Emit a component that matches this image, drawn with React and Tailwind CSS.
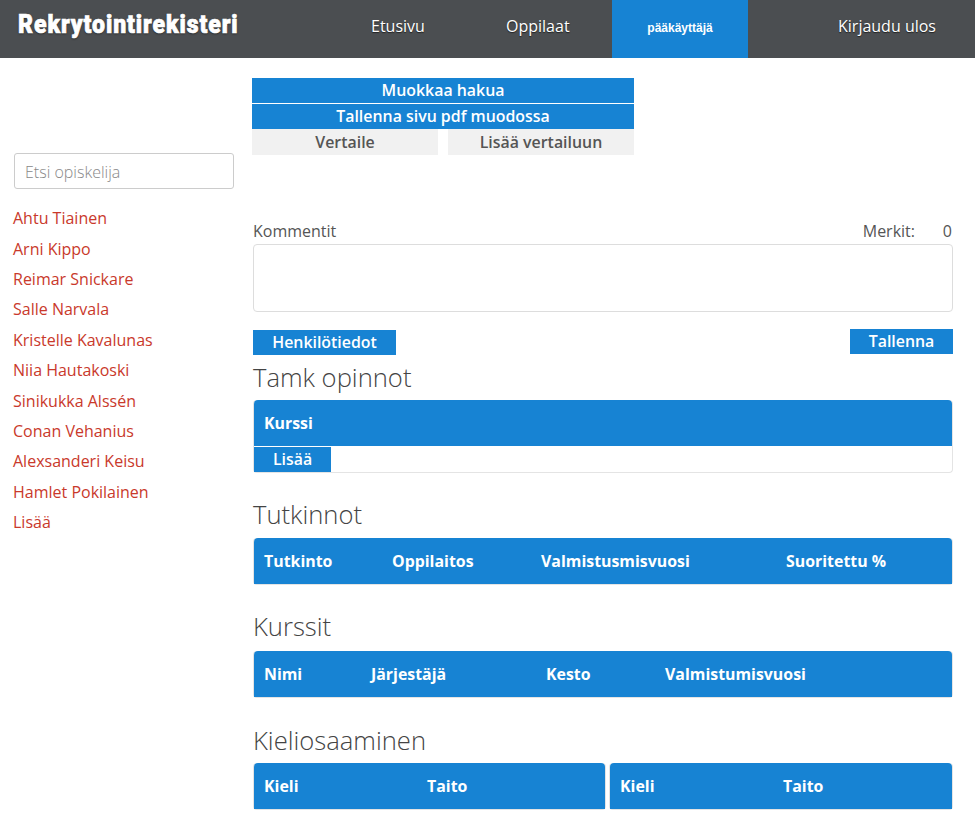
import React from 'react';

const students = [
  'Ahtu Tiainen',
  'Arni Kippo',
  'Reimar Snickare',
  'Salle Narvala',
  'Kristelle Kavalunas',
  'Niia Hautakoski',
  'Sinikukka Alssén',
  'Conan Vehanius',
  'Alexsanderi Keisu',
  'Hamlet Pokilainen',
  'Lisää',
];

function TableHead({ children, className = '' }) {
  return (
    <div className={`h-[46px] pt-[1px] bg-[#1783d3] text-white font-bold text-[15.9px] flex items-center rounded-t-[4px] ${className}`}>
      {children}
    </div>
  );
}

function Heading({ children, className = '' }) {
  return <h2 className={`text-[25.6px] leading-[37px] font-light text-[#444] ${className}`}>{children}</h2>;
}

function Table({ cols }) {
  return (
    <div className="border border-[#e4e4e4] border-t-0 rounded-[4px] h-[47px]">
      <TableHead>
        {cols.map(([name, w]) => (
          <span key={name} className="pl-[10px] shrink-0" style={{ width: w }}>{name}</span>
        ))}
      </TableHead>
    </div>
  );
}

export default function App() {
  return (
    <div className="font-['Open_Sans',sans-serif] antialiased text-[#555] bg-white overflow-hidden h-[823px]">
      <header className="h-[58px] bg-[#4b4e51] flex text-white">
        <div className="w-[371px] pl-[18px] pt-[8px] shrink-0">
          <span className="inline-block origin-left scale-x-[0.92] font-['Roboto',sans-serif] font-black text-[25px] leading-[34px] tracking-[1px] [-webkit-text-stroke:0.7px_white] [text-shadow:0_1px_2px_#222] whitespace-nowrap">
            Rekrytointirekisteri
          </span>
        </div>
        <a className="w-[135px] pt-[14px] text-[16px] leading-[24px] [text-shadow:0_1px_1px_#222] shrink-0">Etusivu</a>
        <a className="w-[106px] pt-[14px] text-[16px] leading-[24px] [text-shadow:0_1px_1px_#222] shrink-0">Oppilaat</a>
        <a className="w-[136px] bg-[#1783d3] pt-[19px] text-center font-['Liberation_Sans',sans-serif] font-bold text-[12px] leading-[18px] shrink-0">pääkäyttäjä</a>
        <a className="ml-[90px] pt-[14px] text-[16px] leading-[24px] [text-shadow:0_1px_1px_#222]">Kirjaudu ulos</a>
      </header>

      <div className="flex">
        <aside className="w-[253px] shrink-0 pl-[13px] pt-[95px]">
          <input
            placeholder="Etsi opiskelija"
            className="block w-[220px] ml-[1px] h-[36px] border border-[#ccc] rounded-[3px] px-[10px] pt-[2px] text-[16px] font-light outline-none placeholder:text-[#888]"
          />
          <ul className="mt-[14.2px] text-[16px] leading-[30.4px] text-[#c9392b]">
            {students.map((s) => <li key={s}>{s}</li>)}
          </ul>
        </aside>

        <main className="w-[700px] shrink-0 pt-[20px]">
          <div className="w-[382px] -ml-[1px] font-semibold text-[15.9px] text-center">
            <button className="block w-full h-[25px] mb-[1px] bg-[#1783d3] text-white leading-[25px]">Muokkaa hakua</button>
            <button className="block w-full h-[25px] bg-[#1783d3] text-white leading-[25px]">Tallenna sivu pdf muodossa</button>
            <div className="flex justify-between">
              <button className="w-[186px] h-[26px] bg-[#f1f1f1] leading-[26px]">Vertaile</button>
              <button className="w-[186px] h-[26px] bg-[#f1f1f1] leading-[26px]">Lisää vertailuun</button>
            </div>
          </div>

          <div className="flex justify-between mt-[64px] pr-[1px] text-[16px] leading-[24px]">
            <span>Kommentit</span>
            <span className="flex"><span>Merkit:</span><span className="w-[37px] text-right">0</span></span>
          </div>
          <textarea className="block w-[700px] h-[68px] mt-[1px] border border-[#ddd] rounded-[4px] outline-none resize-none" />

          <div className="flex justify-between items-start mt-[17px] font-semibold text-[15.9px] text-white">
            <button className="w-[143px] h-[25px] mt-[1px] bg-[#1783d3] leading-[25px]">Henkilötiedot</button>
            <button className="w-[103px] h-[25px] bg-[#1783d3] leading-[25px]">Tallenna</button>
          </div>

          <Heading className="mt-[4px]">Tamk opinnot</Heading>
          <div className="mt-[4px] border border-[#e4e4e4] border-t-0 rounded-[4px] h-[73px]">
            <TableHead><span className="pl-[10px]">Kurssi</span></TableHead>
            <button className="block w-[77px] h-[25px] mt-[1px] bg-[#1783d3] text-white font-semibold text-[15.9px] leading-[25px]">Lisää</button>
          </div>

          <Heading className="mt-[23px] mb-[5px]">Tutkinnot</Heading>
          <Table cols={[['Tutkinto', 128], ['Oppilaitos', 149], ['Valmistusmisvuosi', 245], ['Suoritettu %', 170]]} />

          <Heading className="mt-[23px] mb-[6px]">Kurssit</Heading>
          <Table cols={[['Nimi', 107], ['Järjestäjä', 175], ['Kesto', 119], ['Valmistumisvuosi', 250]]} />

          <Heading className="mt-[24px] mb-[4px]">Kieliosaaminen</Heading>
          <div className="flex gap-[3px]">
            <div className="w-[353px]">
              <Table cols={[['Kieli', 163], ['Taito', 150]]} />
            </div>
            <div className="w-[344px]">
              <Table cols={[['Kieli', 163], ['Taito', 150]]} />
            </div>
          </div>
        </main>
      </div>
    </div>
  );
}
